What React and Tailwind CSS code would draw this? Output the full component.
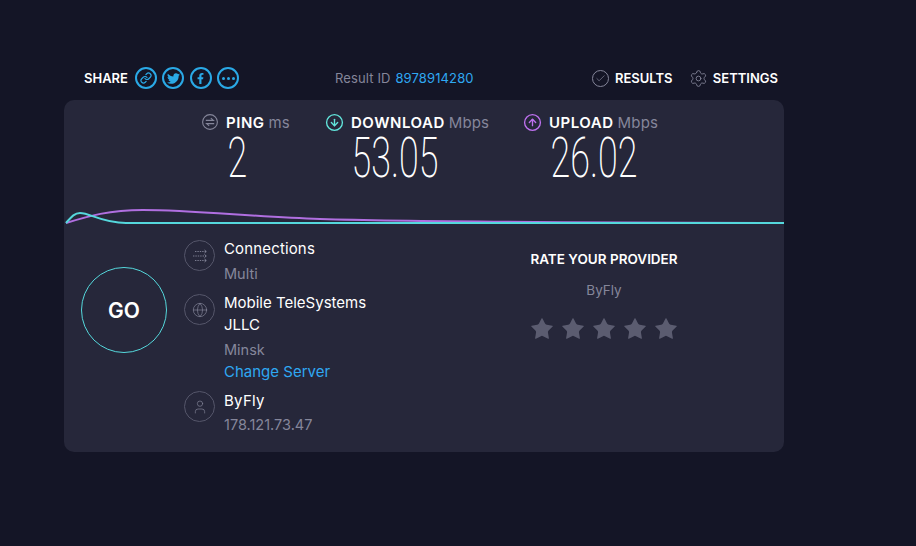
import { Check, Settings, User, Globe, Star, CircleArrowDown, CircleArrowUp, Link } from "lucide-react";
import { FaTwitter, FaFacebookF } from "react-icons/fa";

const font = "font-['Inter','Noto_Sans',sans-serif]";

const shareIcons = [
  <Link key="link" className="h-[12px] w-[12px]" strokeWidth={2.4} />,
  <FaTwitter key="twitter" className="h-[13px] w-[13px]" />,
  <FaFacebookF key="facebook" className="h-[11px] w-[11px]" />,
  <span key="more" className="flex gap-[2px]">
    <i className="h-[3px] w-[3px] rounded-full bg-[#2aa9e6]" />
    <i className="h-[3px] w-[3px] rounded-full bg-[#2aa9e6]" />
    <i className="h-[3px] w-[3px] rounded-full bg-[#2aa9e6]" />
  </span>,
];

function PingIcon() {
  return (
    <svg viewBox="0 0 16 16" className="h-4 w-4" fill="none" stroke="#85869a" strokeWidth="1.1">
      <circle cx="8" cy="8" r="7.4" />
      <path d="M3.8 6.4h7.6L8.8 4.2M12.2 9.6H4.6l2.6 2.2" />
    </svg>
  );
}

function Metric({ icon, label, unit, value, className, valueClass }) {
  return (
    <div className={`flex flex-col ${className}`}>
      <div className="flex h-[20px] items-center text-[15px] font-semibold leading-none">
        {icon}
        <span className="ml-[8px] tracking-[0.035em] text-white">{label}</span>
        <span className="ml-[4px] font-normal tracking-[0.01em] text-[#85869a]">{unit}</span>
      </div>
      <div className={`mt-[6px] flex h-[40px] justify-center overflow-visible ${valueClass}`}>
        <span className="block origin-center scale-x-[0.64] font-['Roboto',sans-serif] text-[56px] font-extralight leading-[40px] text-white">
          {value}
        </span>
      </div>
    </div>
  );
}

function InfoIcon({ children }) {
  return (
    <div className="flex h-[31px] w-[31px] shrink-0 items-center justify-center rounded-full border border-[#55566a] text-[#85869a]">
      {children}
    </div>
  );
}

export default function App() {
  return (
    <div className={`${font} min-h-[546px] w-[916px] overflow-hidden bg-[#141526] pl-[64px]`}>
      <div className="flex h-[100px] w-[720px] items-start pl-[20px] pr-[6px] pt-[67px]">
        <div className="flex w-[251px] items-center">
          <span className="mr-[7px] text-[13px] font-semibold leading-[22px] text-white">SHARE</span>
          <div className="flex gap-[5.5px]">
            {shareIcons.map((icon) => (
              <div
                key={icon.key}
                className="flex h-[22px] w-[22px] items-center justify-center rounded-full border-2 border-[#2aa9e6] text-[#2aa9e6]"
              >
                {icon}
              </div>
            ))}
          </div>
        </div>
        <div className="text-[13px] leading-[22px] tracking-[0.01em] text-[#85869a]">
          Result ID <span className="ml-[1px] text-[#2fa8f2]">8978914280</span>
        </div>
        <div className="ml-auto flex w-[186px] items-center justify-between text-[13px] font-semibold leading-[22px] text-white">
          <span className="flex items-center gap-[6px]">
            <span className="flex h-[17px] w-[17px] items-center justify-center rounded-full border border-[#85869a] text-[#85869a]">
              <Check className="h-[11px] w-[11px]" strokeWidth={1.5} />
            </span>
            RESULTS
          </span>
          <span className="flex items-center gap-[5px]">
            <Settings className="h-[19px] w-[19px] text-[#85869a]" strokeWidth={1.1} />
            SETTINGS
          </span>
        </div>
      </div>

      <main className="h-[352px] w-[720px] rounded-[10px] bg-[#26273a]">
        <div className="flex h-[100px] pl-[138px] pt-[12px]">
          <Metric className="w-[124px]" valueClass="w-[70px]" icon={<PingIcon />} label="PING" unit="ms" value="2" />
          <Metric
            className="w-[198px]"
            valueClass="w-[138px]"
            icon={<CircleArrowDown className="-mx-px h-[19px] w-[19px] shrink-0 text-[#62e6dc]" strokeWidth={1.7} />}
            label="DOWNLOAD"
            unit="Mbps"
            value="53.05"
          />
          <Metric
            className="w-[170px]"
            valueClass="w-[140px]"
            icon={<CircleArrowUp className="-mx-px h-[19px] w-[19px] shrink-0 text-[#bf71f0]" strokeWidth={1.7} />}
            label="UPLOAD"
            unit="Mbps"
            value="26.02"
          />
        </div>

        <svg viewBox="0 0 720 30" className="block h-[30px] w-[720px]" fill="none">
          <path
            d="M2 23C25 16 45 10 79 10C130 10 190 17 256 19C340 21.5 500 22.5 720 23"
            stroke="#b06fe0"
            strokeWidth="2"
          />
          <path d="M2 23C8 16 11 13 16 13C26 13 38 23 62 23L720 23" stroke="#55d8dc" strokeWidth="2" />
        </svg>

        <div className="flex pl-[17px]">
          <div className="pt-[37px]">
            <div className="flex h-[86px] w-[86px] items-center justify-center rounded-full border border-[#55d8dc] pt-[2px] text-[21px] font-semibold text-white">
              GO
            </div>
          </div>

          <div className="ml-[17px] w-[200px] pt-[10px] text-[14.5px]">
            <div className="flex h-[50px] gap-[9px]">
              <InfoIcon>
                <svg viewBox="0 0 16 14" className="h-[14px] w-4" fill="none" stroke="currentColor" strokeWidth="0.9">
                  <path strokeDasharray="1.4 1" d="M3 2.5h11M1 7h13M3 11.5h11" />
                  <path d="M12.5 1l1.8 1.5-1.8 1.5M12.5 5.5L14.3 7l-1.8 1.5M12.5 10l1.8 1.5-1.8 1.5" />
                </svg>
              </InfoIcon>
              <div className="-mt-px">
                <div className="text-[15px] leading-[20px] tracking-[0.01em] text-white">Connections</div>
                <div className="mt-[5px] leading-[20px] text-[#85869a]">Multi</div>
              </div>
            </div>

            <div className="mt-[4px] flex h-[93px] gap-[9px]">
              <InfoIcon>
                <Globe className="h-4 w-4" strokeWidth={1} />
              </InfoIcon>
              <div className="-mt-[2px]">
                <div className="text-[15px] leading-[22px] text-white">
                  Mobile TeleSystems
                  <br />
                  JLLC
                </div>
                <div className="mt-[4px] leading-[20px] text-[#85869a]">Minsk</div>
                <div className="mt-[2px] text-[15px] leading-[20px] text-[#2fa8f2]">Change Server</div>
              </div>
            </div>

            <div className="mt-[4px] flex gap-[9px]">
              <InfoIcon>
                <User className="h-4 w-4" strokeWidth={1} />
              </InfoIcon>
              <div>
                <div className="text-[15px] leading-[20px] tracking-[0.02em] text-white">ByFly</div>
                <div className="mt-[4px] leading-[20px] text-[#85869a]">178.121.73.47</div>
              </div>
            </div>
          </div>

          <div className="ml-[135px] flex w-[170px] flex-col items-center pt-[20px]">
            <div className="whitespace-nowrap text-[13.5px] font-semibold leading-[18px] text-white">RATE YOUR PROVIDER</div>
            <div className="mt-[13px] text-[13.5px] leading-[18px] text-[#85869a]">ByFly</div>
            <div className="mt-[17px] flex gap-[5px]">
              {[1, 2, 3, 4, 5].map((n) => (
                <Star key={n} className="h-[26px] w-[26px] fill-[#5b5c70] text-[#5b5c70]" strokeWidth={0} />
              ))}
            </div>
          </div>
        </div>
      </main>
    </div>
  );
}
